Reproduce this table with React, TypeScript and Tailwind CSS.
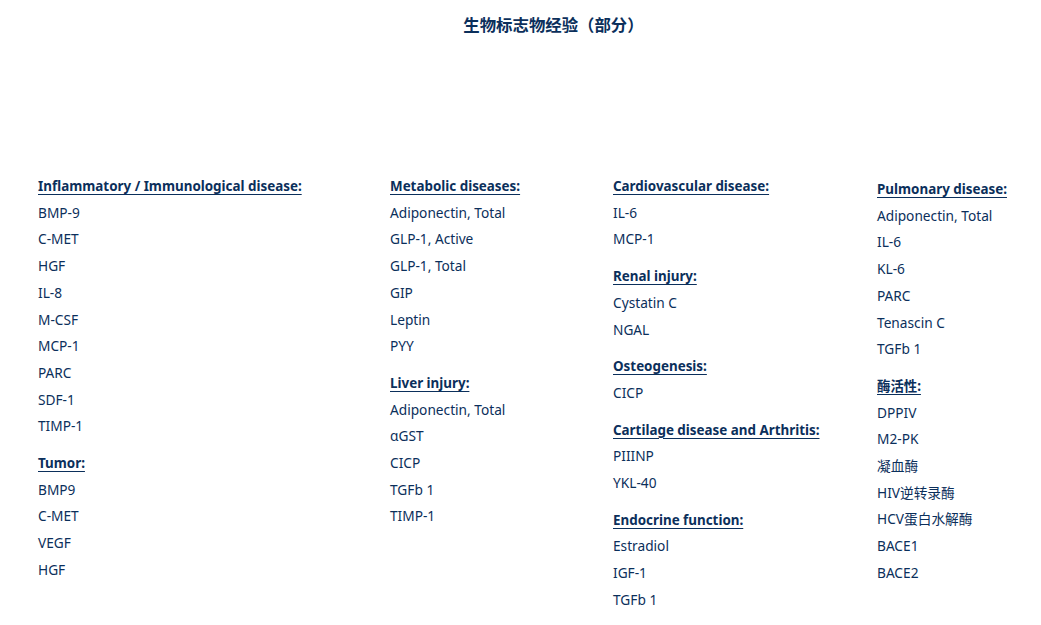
const sections: { col: number; title: string; items: string[] }[][] = [
    [
        { col: 1, title: "Inflammatory / Immunological disease:", items: ["BMP-9", "C-MET", "HGF", "IL-8", "M-CSF", "MCP-1", "PARC", "SDF-1", "TIMP-1"] },
        { col: 1, title: "Tumor:", items: ["BMP9", "C-MET", "VEGF", "HGF"] },
    ],
    [
        { col: 2, title: "Metabolic diseases:", items: ["Adiponectin, Total", "GLP-1, Active", "GLP-1, Total", "GIP", "Leptin", "PYY"] },
        { col: 2, title: "Liver injury:", items: ["Adiponectin, Total", "αGST", "CICP", "TGFb 1", "TIMP-1"] },
    ],
    [
        { col: 3, title: "Cardiovascular disease:", items: ["IL-6", "MCP-1"] },
        { col: 3, title: "Renal injury:", items: ["Cystatin C", "NGAL"] },
        { col: 3, title: "Osteogenesis:", items: ["CICP"] },
        { col: 3, title: "Cartilage disease and Arthritis:", items: ["PIIINP", "YKL-40"] },
        { col: 3, title: "Endocrine function:", items: ["Estradiol", "IGF-1", "TGFb 1"] },
    ],
    [
        { col: 4, title: "Pulmonary disease:", items: ["Adiponectin, Total", "IL-6", "KL-6", "PARC", "Tenascin C", "TGFb 1"] },
        { col: 4, title: "酶活性:", items: ["DPPIV", "M2-PK", "凝血酶", "HIV逆转录酶", "HCV蛋白水解酶", "BACE1", "BACE2"] },
    ],
]

function Column({ groups, className }: { groups: (typeof sections)[number]; className?: string }) {
    return (
        <div className={className}>
            {groups.map((g, i) => (
                <div key={g.title} className={i > 0 ? "mt-[10px]" : ""}>
                    <div className="text-[13.4px] font-bold underline underline-offset-[3px] decoration-1">{g.title}</div>
                    {g.items.map((it) => (
                        <div key={it}>{it}</div>
                    ))}
                </div>
            ))}
        </div>
    )
}

export default function App() {
    return (
        <div
            className="min-h-[625px] bg-white text-[#0b2f5b]"
            style={{ fontFamily: '"Noto Sans", "Noto Sans CJK SC", sans-serif' }}
        >
            <h1 className="pl-[66px] pt-[13px] text-center text-[16.4px] font-bold leading-[24px]">
                生物标志物经验（部分）
            </h1>
            <div className="mt-[136px] flex pl-[38px] text-[13.7px] leading-[26.7px]">
                <Column groups={sections[0]} className="w-[352px]" />
                <Column groups={sections[1]} className="w-[223px]" />
                <Column groups={sections[2]} className="w-[264px]" />
                <Column groups={sections[3]} className="pt-[3px]" />
            </div>
        </div>
    )
}
